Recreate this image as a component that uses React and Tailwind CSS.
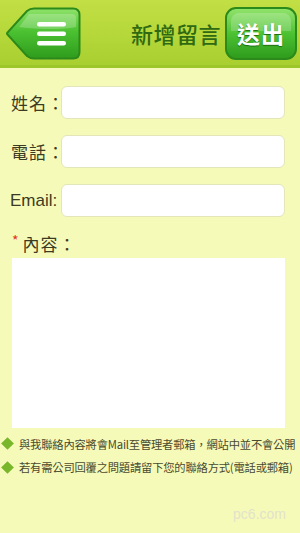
import React from "react";

const font = { fontFamily: '"Noto Sans CJK TC", "Liberation Sans", sans-serif' };

function BackButton() {
    return (
        <button className="relative w-[76px] h-[53px]">
            <svg width="76" height="53" viewBox="0 0 76 53" className="absolute inset-0">
                <defs>
                    <linearGradient id="bk" x1="0" y1="0" x2="0" y2="1">
                        <stop offset="0" stopColor="#8fe36a" />
                        <stop offset="0.45" stopColor="#4cc232" />
                        <stop offset="1" stopColor="#2f9c1d" />
                    </linearGradient>
                </defs>
                <path
                    d="M3 28 Q1 26.5 3 25 L22 4 Q25 1.5 29 1.5 L68 1.5 Q74.5 1.5 74.5 8 L74.5 45 Q74.5 51.5 68 51.5 L29 51.5 Q25 51.5 22 49 Z"
                    fill="url(#bk)"
                    stroke="#2c8a1a"
                    strokeWidth="2"
                />
                <path d="M24 7 L67 7 Q71 7 71 11 L71 20 Q48 24 14 20 Z" fill="#ffffff" opacity="0.22" />
                <rect x="32" y="15" width="29" height="4.5" rx="2.2" fill="#ffffff" />
                <rect x="32" y="24.5" width="29" height="4.5" rx="2.2" fill="#ffffff" />
                <rect x="32" y="34" width="29" height="4.5" rx="2.2" fill="#ffffff" />
            </svg>
        </button>
    );
}

function SendButton() {
    return (
        <button className="relative w-[72px] h-[53px] rounded-[11px] border-2 border-[#2c8a1a] bg-gradient-to-b from-[#8fe36a] via-[#4cc232] to-[#2f9c1d] flex items-center justify-center overflow-hidden">
            <span className="absolute left-1 right-1 top-1 h-[18px] rounded-t-[8px] bg-white/20"></span>
            <span className="relative text-white text-[23px] font-bold tracking-[1px] [text-shadow:0_1px_1px_#1d6b10]" style={font}>送出</span>
        </button>
    );
}

function Row({ label, className }) {
    return (
        <div className="flex items-center">
            <span className={`text-[17px] text-[#3b3a22] w-[61px] pl-[11px] whitespace-nowrap ${className}`}>{label}</span>
            <div className="w-[224px] h-[33px] bg-white rounded-[6px] border border-[#e2e6b8]"></div>
        </div>
    );
}

function Note({ children }) {
    return (
        <div className="flex items-center gap-[7px] pl-[2px]">
            <span className="w-[9px] h-[9px] bg-[#78b62a] rotate-45 shrink-0 ml-[1px]"></span>
            <span className="text-[11.3px] text-[#4a4a2e] whitespace-nowrap tracking-[-0.2px]">{children}</span>
        </div>
    );
}

export default function App() {
    return (
        <div className="w-[300px] h-[533px] bg-[#f6fab9] flex flex-col overflow-hidden" style={font}>
            <div className="h-[68px] bg-gradient-to-b from-[#c2df45] via-[#b6d83a] to-[#a8cf30] border-b-[3px] border-[#9cc62a] flex items-center justify-between pl-[5px] pr-[3px] pt-[2px]">
                <BackButton />
                <div className="flex items-center gap-[4px]">
                    <span className="text-[22px] text-[#2f6a12] font-medium tracking-[0.5px]">新增留言</span>
                    <SendButton />
                </div>
            </div>

            <div className="flex flex-col gap-[16px] pt-[18px]">
                <Row label="姓名：" className="tracking-[1px]" />
                <Row label="電話：" className="tracking-[1px]" />
                <Row label="Email:" className="font-['Liberation_Sans'] !pl-[10px]" />
            </div>

            <div className="pl-[12px] pt-[14px] flex items-center">
                <span className="text-[#e0332a] text-[14px] mr-[4px] -mt-[6px]">*</span>
                <span className="text-[17px] text-[#3b3a22] tracking-[1px]">內容：</span>
            </div>
            <div className="ml-[12px] mt-[1px] w-[273px] h-[170px] bg-white"></div>

            <div className="flex flex-col gap-[7px] pt-[8px]">
                <Note>與我聯絡內容將會Mail至管理者郵箱，網站中並不會公開</Note>
                <Note>若有需公司回覆之問題請留下您的聯絡方式(電話或郵箱)</Note>
            </div>

            <div className="mt-auto mb-[8px] self-end mr-[14px] text-[14px] text-[#e2e2cc] font-['Liberation_Sans']">pc6.com</div>
        </div>
    );
}
